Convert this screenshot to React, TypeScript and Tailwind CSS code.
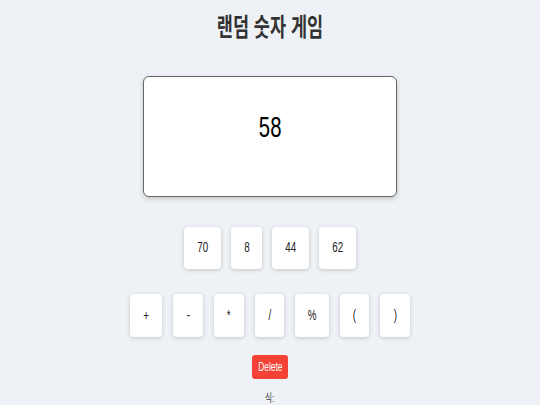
import React from 'react'

const NUMBERS = [
  { v: '70', w: 'w-[37px]' },
  { v: '8', w: 'w-[31px]' },
  { v: '44', w: 'w-[37px]' },
  { v: '62', w: 'w-[37px]' },
]

const OPS = [
  { v: '+', w: 'w-[32px]' },
  { v: '-', w: 'w-[30px]' },
  { v: '*', w: 'w-[30px]' },
  { v: '/', w: 'w-[29px]' },
  { v: '%', w: 'w-[34px]' },
  { v: '(', w: 'w-[29px]' },
  { v: ')', w: 'w-[30px]' },
]

// text in the shot is squeezed horizontally, so every label gets scale-x-70
function Squeeze({ children }: { children: React.ReactNode }) {
  return <span className="inline-block scale-x-70 whitespace-nowrap">{children}</span>
}

export default function App() {
  return (
    <div
      className="w-[540px] h-[405px] overflow-hidden bg-[#eef1f5] flex flex-col items-center text-[#222]"
      style={{ fontFamily: '"Liberation Sans", "Noto Sans CJK KR", sans-serif' }}
    >
      <h1 className="mt-[12px] h-[30px] leading-[30px] text-[25px] font-bold text-[#333]">
        <Squeeze>랜덤 숫자 게임</Squeeze>
      </h1>

      <div className="mt-[34px] w-[254px] h-[124px] bg-white border border-[#666] rounded-[6px] shadow-[0_2px_5px_rgba(0,0,0,0.18)] flex justify-center pt-[32px]">
        <span className="text-[29px] leading-[36px] text-black">
          <Squeeze>58</Squeeze>
        </span>
      </div>

      <div className="mt-[30px] flex gap-[10px]">
        {NUMBERS.map((n) => (
          <button
            key={n.v}
            className={`${n.w} h-[42px] bg-white rounded-[4px] shadow-[0_1px_4px_rgba(0,0,0,0.18)] flex items-center justify-center text-[14px] text-[#222]`}
          >
            <Squeeze>{n.v}</Squeeze>
          </button>
        ))}
      </div>

      <div className="mt-[25px] flex gap-[11px]">
        {OPS.map((o) => (
          <button
            key={o.v}
            className={`${o.w} h-[43px] bg-white rounded-[4px] shadow-[0_1px_4px_rgba(0,0,0,0.18)] flex items-center justify-center text-[14px] text-[#222]`}
          >
            <Squeeze>{o.v}</Squeeze>
          </button>
        ))}
      </div>

      <button className="mt-[18px] w-[36px] h-[25px] bg-[#f44336] rounded-[3px] text-white text-[12px] flex items-center justify-center">
        <Squeeze>Delete</Squeeze>
      </button>

      <p className="mt-[12px] text-[11px] leading-[14px] text-[#333]">
        <Squeeze>식:</Squeeze>
      </p>
    </div>
  )
}
